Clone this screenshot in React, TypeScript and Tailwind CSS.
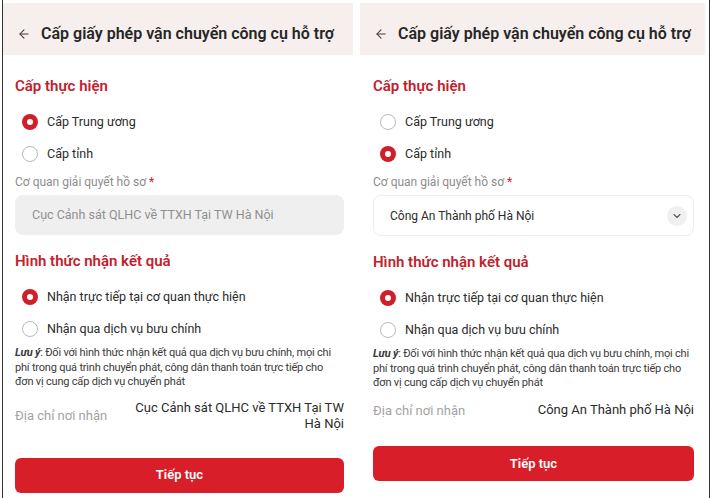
import React from 'react';
import { ArrowLeft, ChevronDown } from 'lucide-react';

interface PanelProps {
  level: 'tw' | 'tinh';
  agency: string;
  editable: boolean;
  widthClass: string;
  padClass: string;
  notePad: string;
}

const Radio: React.FC<{ checked: boolean }> = ({ checked }) =>
  checked ? (
    <span className="w-4 h-4 rounded-full bg-[#cf1f2b] flex items-center justify-center shrink-0">
      <span className="w-[6px] h-[6px] rounded-full bg-white" />
    </span>
  ) : (
    <span className="w-4 h-4 rounded-full border border-[#b9b9b9] bg-white shrink-0" />
  );

const Option: React.FC<{ checked: boolean; label: string }> = ({ checked, label }) => (
  <div className="flex items-center gap-[9px] pl-[7px] h-8 text-[12.5px] leading-4 text-[#2b2b2b]">
    <Radio checked={checked} />
    <span>{label}</span>
  </div>
);

const Panel: React.FC<PanelProps> = ({ level, agency, editable, widthClass, padClass, notePad }) => {
  return (
    <div className={`${widthClass} flex flex-col`}>
      {/* header */}
      <div className="h-[52px] shrink-0 bg-[#f6efed] flex items-center gap-[10px] pl-[14px] pt-[10px]">
        <ArrowLeft size={14} strokeWidth={1.8} className="text-[#3a3a3a]" />
        <h1 className="text-[16px] font-semibold text-[#262626] whitespace-nowrap">
          Cấp giấy phép vận chuyển công cụ hỗ trợ
        </h1>
      </div>

      <div className={`${padClass} shrink-0 flex flex-col`}>
        <h2 className="mt-[21px] text-[15px] font-semibold text-[#c3202c] leading-5">Cấp thực hiện</h2>
        <div className="mt-[10px] flex flex-col">
          <Option checked={level === 'tw'} label="Cấp Trung ương" />
          <Option checked={level === 'tinh'} label="Cấp tỉnh" />
        </div>

        <div className="mt-[4px] text-[12px] text-[#8d8d8d] leading-4">
          Cơ quan giải quyết hồ sơ <span className="text-[#d0202c]">*</span>
        </div>

        {editable ? (
          <div className="mt-[5px] h-[41px] rounded-lg border border-[#ededed] bg-white flex items-center justify-between pl-[16px] pr-[6px]">
            <span className="text-[12px] text-[#2b2b2b]">{agency}</span>
            <span className="w-5 h-5 rounded-full bg-[#f0f0f0] flex items-center justify-center">
              <ChevronDown size={12} strokeWidth={2.2} className="text-[#555]" />
            </span>
          </div>
        ) : (
          <div className="mt-[5px] h-[40px] rounded-lg bg-[#efefef] flex items-center pl-[17px]">
            <span className="text-[12.5px] text-[#8f8f8f]">{agency}</span>
          </div>
        )}

        <h2 className="mt-[16px] text-[15px] font-semibold text-[#c3202c] leading-5">Hình thức nhận kết quả</h2>
        <div className="mt-[10px] flex flex-col">
          <Option checked label="Nhận trực tiếp tại cơ quan thực hiện" />
          <Option checked={false} label="Nhận qua dịch vụ bưu chính" />
        </div>

        <p className={`${notePad} mt-[1px] text-[11px] leading-[14.5px] tracking-[-0.2px] text-[#3a3a3a]`}>
          <span className="font-bold italic">Lưu ý</span>: Đối với hình thức nhận kết quả qua dịch vụ bưu chính, mọi chi phí trong
          quá trình chuyển phát, công dân thanh toán trực tiếp cho đơn vị cung cấp dịch vụ chuyển phát
        </p>

        <div className="mt-[10px] flex items-center justify-between">
          <span className="text-[13px] text-[#a3a3a3]">Địa chỉ nơi nhận</span>
          <span className="w-[215px] text-right text-[13px] leading-4 text-[#2b2b2b]">{agency}</span>
        </div>

        <button className="mt-[26px] h-[35px] w-full rounded-md bg-[#d71e29] text-white text-[13px] font-semibold">
          Tiếp tục
        </button>
      </div>
    </div>
  );
};

export default function App() {
  return (
    <div
      className="w-[713px] h-[498px] bg-white flex pt-[3px] overflow-hidden"
      style={{ fontFamily: 'Roboto, "Noto Sans", sans-serif' }}
    >
      <div className="w-[2px] shrink-0" />
      <div className="w-px bg-[#333] shrink-0 -mt-[3px]" />
      <Panel
        level="tw"
        agency="Cục Cảnh sát QLHC về TTXH Tại TW Hà Nội"
        editable={false}
        widthClass="w-[350px] shrink-0"
        padClass="pl-3 pr-[9px]"
        notePad="pr-[4px]"
      />
      <div className="w-[7px] shrink-0" />
      <Panel
        level="tinh"
        agency="Công An Thành phố Hà Nội"
        editable
        widthClass="w-[345px] shrink-0"
        padClass="pl-[13px] pr-[11px]"
        notePad="pr-0"
      />
      <div className="w-[4px] shrink-0" />
      <div className="w-px bg-[#333] shrink-0 -mt-[3px]" />
    </div>
  );
}
